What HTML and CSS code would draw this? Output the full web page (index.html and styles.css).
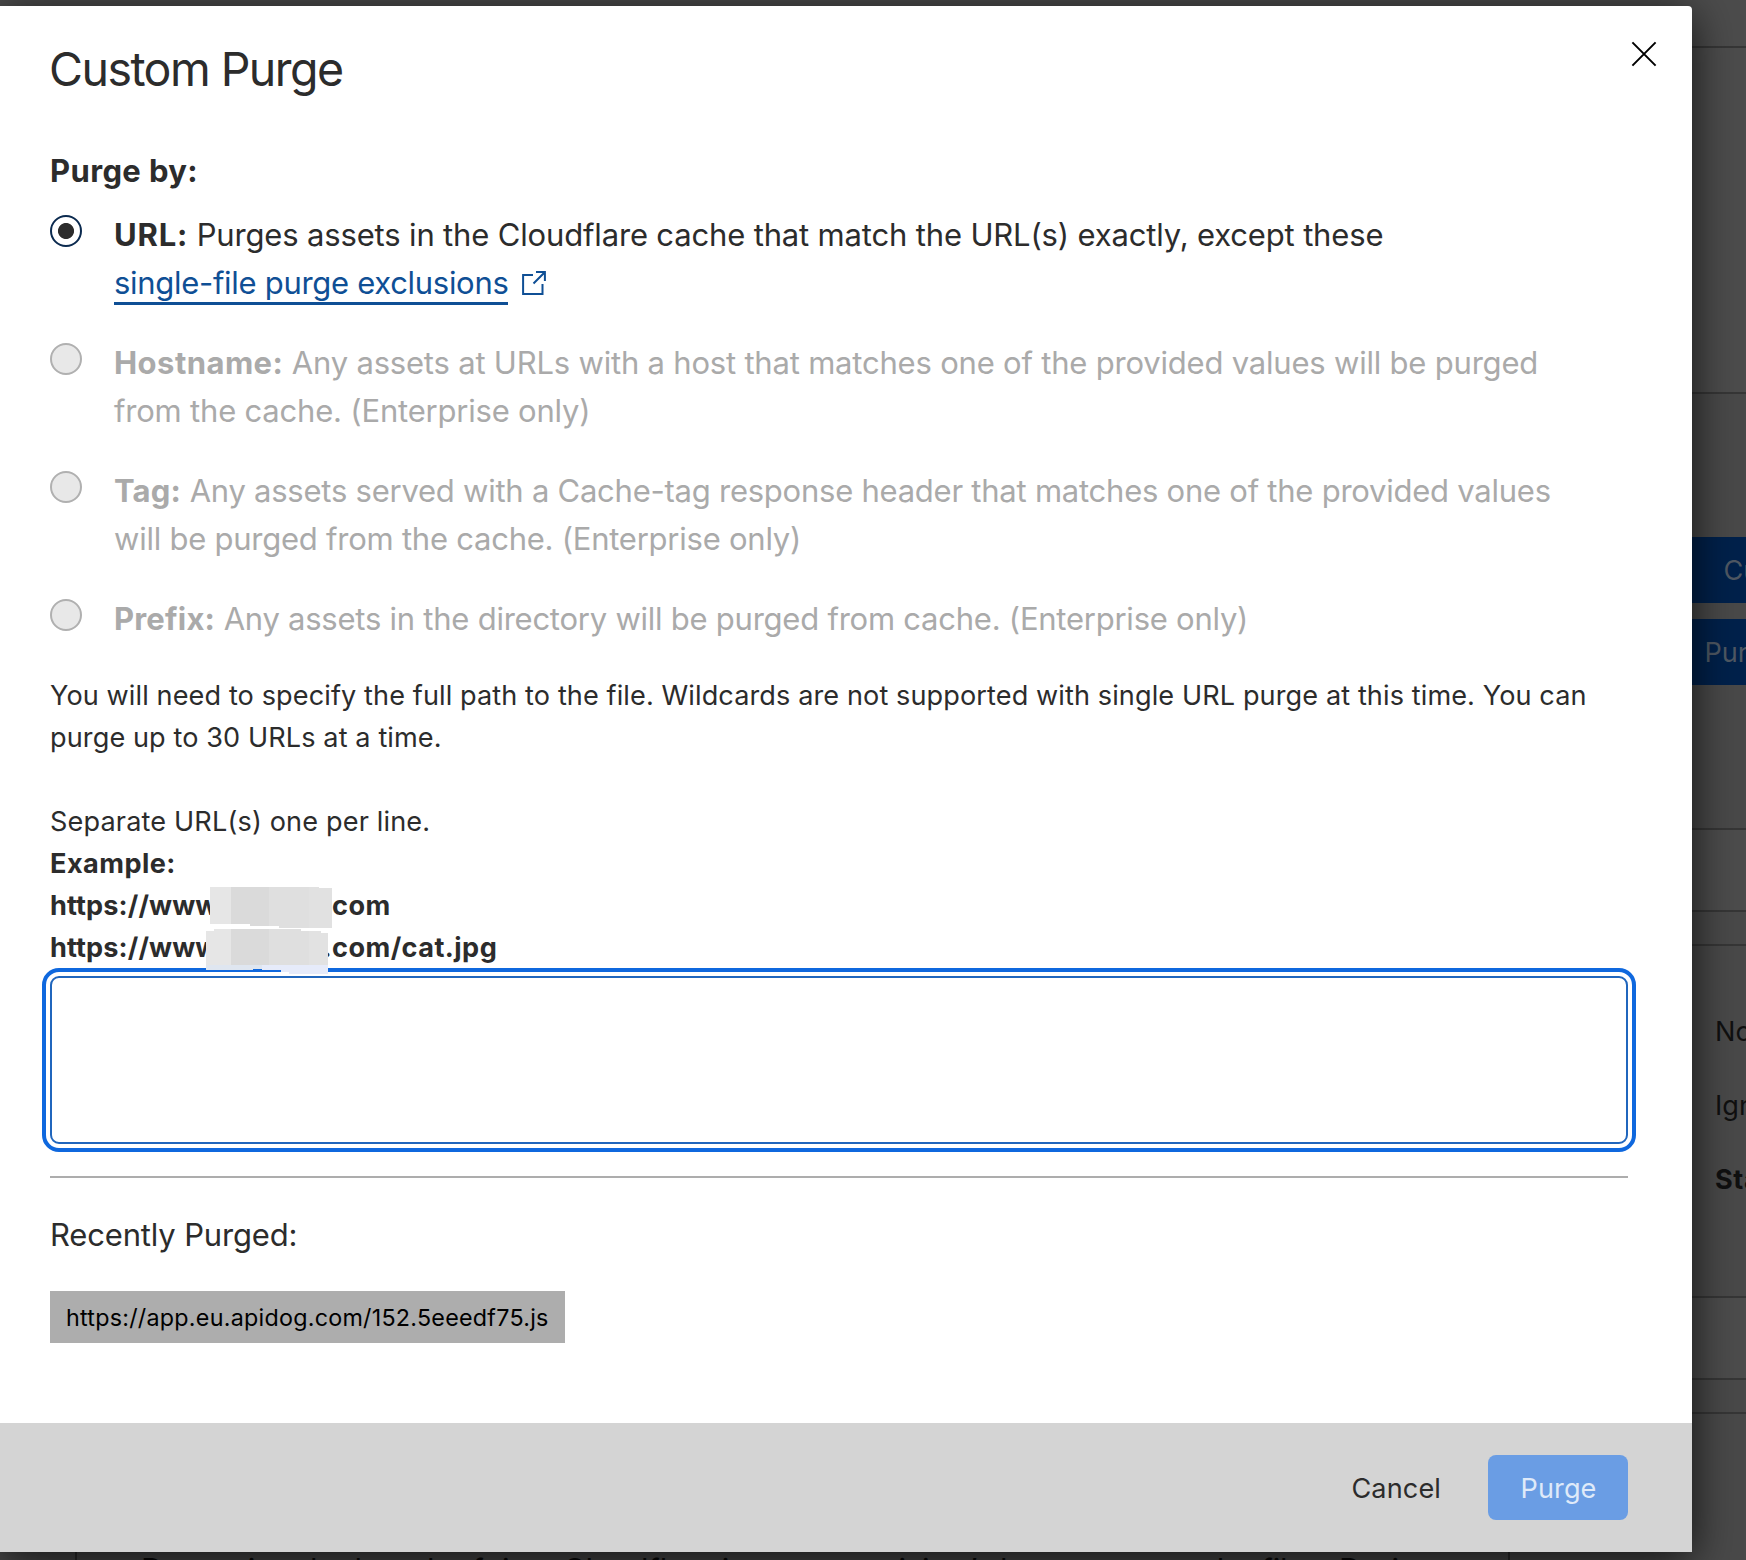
FILE: index.html
```html
<!DOCTYPE html>
<html lang="en">
<head>
<meta charset="utf-8">
<title>Custom Purge</title>
<link rel="stylesheet" href="styles.css">
</head>
<body>
<div class="page" aria-hidden="true">
  <div class="strip strip-top"></div>
  <div class="strip strip-card"></div>
  <div class="strip strip-actions">
    <div class="page-button page-button-custom">Custom Purge</div>
    <div class="page-button">Purge Everything</div>
  </div>
  <div class="strip strip-foot"></div>
  <div class="strip strip-gap"></div>
  <div class="strip strip-levels">
    <span>No query string</span>
    <span>Ignore query string</span>
    <strong>Standard</strong>
  </div>
  <div class="strip strip-foot-low"></div>
  <div class="strip strip-gap"></div>
  <div class="strip strip-ttl">
    <p class="ttl-text">Determine the length of time Cloudflare instructs a visitor’s browser to cache files. During</p>
  </div>
</div>

<section class="dialog" role="dialog" aria-labelledby="dialog-title">
  <div class="dialog-body">
    <header class="dialog-header">
      <h1 class="title" id="dialog-title">Custom Purge</h1>
      <button class="close" aria-label="Close">
        <svg width="26" height="26" viewBox="0 0 26 26"><path d="M1.4 1.4 24.6 24.6M24.6 1.4 1.4 24.6" fill="none" stroke="#000" stroke-width="2"/></svg>
      </button>
    </header>

    <h2 class="legend">Purge by:</h2>
    <div class="options">
      <div class="option option-url">
        <span class="radio radio-checked"></span>
        <p><b>URL:</b> Purges assets in the Cloudflare cache that match the URL(s) exactly, except these<br><a class="link">single-file purge exclusions</a><svg class="external" width="24" height="24" viewBox="0 0 24 24"><path d="M11 4H1.100V23H20.500V13M14 1.100H22.900V10M22.500 1.500 11.500 12.500" fill="none" stroke="#0f4f95" stroke-width="2"/></svg></p>
      </div>
      <div class="option option-disabled">
        <span class="radio"></span>
        <p><b>Hostname:</b> Any assets at URLs with a host that matches one of the provided values will be purged<br>from the cache. (Enterprise only)</p>
      </div>
      <div class="option option-disabled option-tight">
        <span class="radio"></span>
        <p><b>Tag:</b> Any assets served with a Cache-tag response header that matches one of the provided values<br>will be purged from the cache. (Enterprise only)</p>
      </div>
      <div class="option option-disabled option-tight">
        <span class="radio"></span>
        <p><b>Prefix:</b> Any assets in the directory will be purged from cache. (Enterprise only)</p>
      </div>
    </div>

    <div class="help">
      <p class="help-path">You will need to specify the full path to the file. Wildcards are not supported with single URL purge at this time. You can<br>purge up to 30 URLs at a time.</p>
      <p>Separate URL(s) one per line.</p>
      <div class="example">
        <div>Example:</div>
        <div><span class="host">https://www</span>.com</div>
        <div><span class="host">https://www</span>.com/cat.jpg</div>
        <svg class="redaction" width="126" height="88" viewBox="206 887 126 88" shape-rendering="crispEdges">
          <path fill="#e6e6e6" d="M210 887h21v37h-21z"/>
          <path fill="#dadada" d="M231 887h38v39h-19v-2h-19z"/>
          <path fill="#dfdfdf" d="M269 887h40v41h-30v-2h-10z"/>
          <path fill="#e1e1e1" d="M309 887h10v1h13v40h-23z"/>
          <path fill="#e6e6e6" d="M206 931h8v-2h17v36h-25z"/>
          <path fill="#dadada" d="M231 929h38v36h-38z"/>
          <path fill="#dfdfdf" d="M269 929h32v2h8v34h-40z"/>
          <path fill="#e2e2e2" d="M309 931h12v2h7v32h-19z"/>
          <path fill="#dfe6f0" d="M206 965h56v4h-9v1h-47z"/>
          <path fill="#e6ebfa" d="M262 965h66v9h-39v-2h-8v-2h-19z"/>
        </svg>
      </div>
    </div>
    <textarea class="urls" aria-label="URLs"></textarea>
    <hr class="divider">
    <h3 class="recent-title">Recently Purged:</h3>
    <div class="chip">https://app.eu.apidog.com/152.5eeedf75.js</div>
  </div>
  <footer class="dialog-footer">
    <button class="button">Cancel</button>
    <button class="button button-primary">Purge</button>
  </footer>
</section>
</body>
</html>
```
FILE: styles.css
```css
* { box-sizing: border-box; }

body {
  margin: 0;
  width: 1746px;
  height: 1560px;
  overflow: hidden;
  position: relative;
  background: #494949;
  color: #2c2c2c;
  font-family: Inter, "Liberation Sans", sans-serif;
}

h1, h2, h3, p { margin: 0; font-weight: 400; }
button { border: 0; padding: 0; background: none; font: inherit; color: inherit; }

/* dimmed page behind the dialog */
.page { display: flex; flex-direction: column; height: 1560px; overflow: hidden; }
.strip { flex: none; border-bottom: 2px solid #363636; background: #4c4c4c; white-space: nowrap; }
.strip-top { height: 48px; }
.strip-card { height: 346px; }
.strip-actions {
  display: flex;
  flex-direction: column;
  gap: 16px;
  height: 436px;
  padding: 143px 0 0 1672px;
  background: #494949;
}
.page-button {
  flex: none;
  height: 66px;
  padding-left: 32.5px;
  background: #00214b;
  color: #4f5863;
  font-size: 27.1px;
  line-height: 68px;
}
.page-button-custom { padding-left: 51.5px; }
.strip-foot { height: 82px; }
.strip-gap { height: 34px; background: #494949; }
.strip-levels {
  display: flex;
  flex-direction: column;
  gap: 32px;
  height: 352px;
  padding: 65px 0 0 1715px;
  background: #494949;
  color: #101010;
  font-size: 27.1px;
  line-height: 42px;
}
.strip-levels strong { letter-spacing: .6px; }
.strip-foot-low { height: 82px; }
.strip-ttl {
  display: flex;
  align-items: flex-end;
  width: 1435px;
  height: 180px;
  margin-left: 75px;
  padding-left: 64px;
  border: solid #2c2c2c;
  border-width: 0 2px;
  background: #494949;
}
.ttl-text { color: #080808; font-size: 31px; line-height: 48px; letter-spacing: -.14px; }

.dialog {
  position: absolute;
  top: 6px;
  left: 0;
  width: 1692px;
  height: 1546px;
  display: flex;
  flex-direction: column;
  border-radius: 0 4px 0 0;
  background: #fff;
  box-shadow: 0 8px 44px rgba(0, 0, 0, .76);
}
.dialog-body { flex: 1; padding: 33px 64px 0 50px; }
.dialog-header { display: flex; justify-content: space-between; height: 60px; }
.title { margin-left: -1px; font-size: 46.5px; line-height: 60px; letter-spacing: -1.54px; }
.close { width: 26px; height: 26px; margin: 2px -29px 0 0; }
.close svg { display: block; }

.legend { margin-top: 48px; font-size: 31px; font-weight: 700; line-height: 48px; letter-spacing: .38px; }

.options { display: flex; flex-direction: column; gap: 32px; margin-top: 16px; }
.option {
  display: flex;
  gap: 32px;
  font-size: 31px;
  line-height: 48px;
  letter-spacing: -.2px;
  white-space: nowrap;
}
.option b { font-weight: 700; letter-spacing: .45px; }
.option-url { letter-spacing: -.16px; }
.option-url b { letter-spacing: .8px; }
.option-tight { letter-spacing: -.24px; }
.option-tight b { letter-spacing: .2px; }
.option-disabled { color: #aaa; }
.radio {
  flex: none;
  width: 32px;
  height: 32px;
  margin-top: 4px;
  border: 2px solid #b0b0b0;
  border-radius: 50%;
  background: #e8e8e8;
}
.radio-checked { border-color: #0b2a4f; background: radial-gradient(circle, #2c2c2c 7.6px, #fff 8.4px); }
.link {
  display: inline-block;
  height: 46px;
  border-bottom: 3px solid #0f4f95;
  color: #0f4f95;
  letter-spacing: -.3px;
  vertical-align: top;
}
.external { display: inline-block; margin: 12px 0 0 13.5px; vertical-align: top; }

.help {
  margin-top: 32px;
  font-size: 27.1px;
  line-height: 42px;
  letter-spacing: .15px;
  white-space: nowrap;
}
.help-path { margin-bottom: 42px; letter-spacing: .1px; }
.example { position: relative; font-weight: 700; letter-spacing: .45px; }
.host { display: inline-block; width: 272.500px; letter-spacing: .12px; }
.redaction { position: absolute; left: 156px; top: 44px; z-index: 1; }

.urls {
  display: block;
  width: 1578px;
  height: 168px;
  margin-top: 7px;
  border: 2px solid #2066bd;
  border-radius: 9px;
  outline: 4px solid #0f68de;
  outline-offset: 4px;
  background: #fff;
  resize: none;
}
.divider { height: 2px; margin: 32px 0 33px; border: 0; background: #adadad; }
.recent-title { font-size: 31px; line-height: 48px; letter-spacing: -.16px; }
.chip {
  width: 515px;
  height: 52px;
  margin-top: 32px;
  padding-left: 16px;
  background: #adadad;
  color: #000;
  font-size: 23.3px;
  line-height: 54px;
  letter-spacing: .25px;
}

.dialog-footer {
  flex: none;
  display: flex;
  justify-content: flex-end;
  align-items: flex-start;
  gap: 16px;
  height: 129px;
  padding: 32px 64px 0;
  background: #d4d4d4;
}
.button { height: 65px; padding: 1px 31px 0 32px; border-radius: 8px; font-size: 27.1px; line-height: 65px; letter-spacing: .12px; }
.button-primary { width: 140px; background: #6a9de4; color: #dfeaf9; }
```
